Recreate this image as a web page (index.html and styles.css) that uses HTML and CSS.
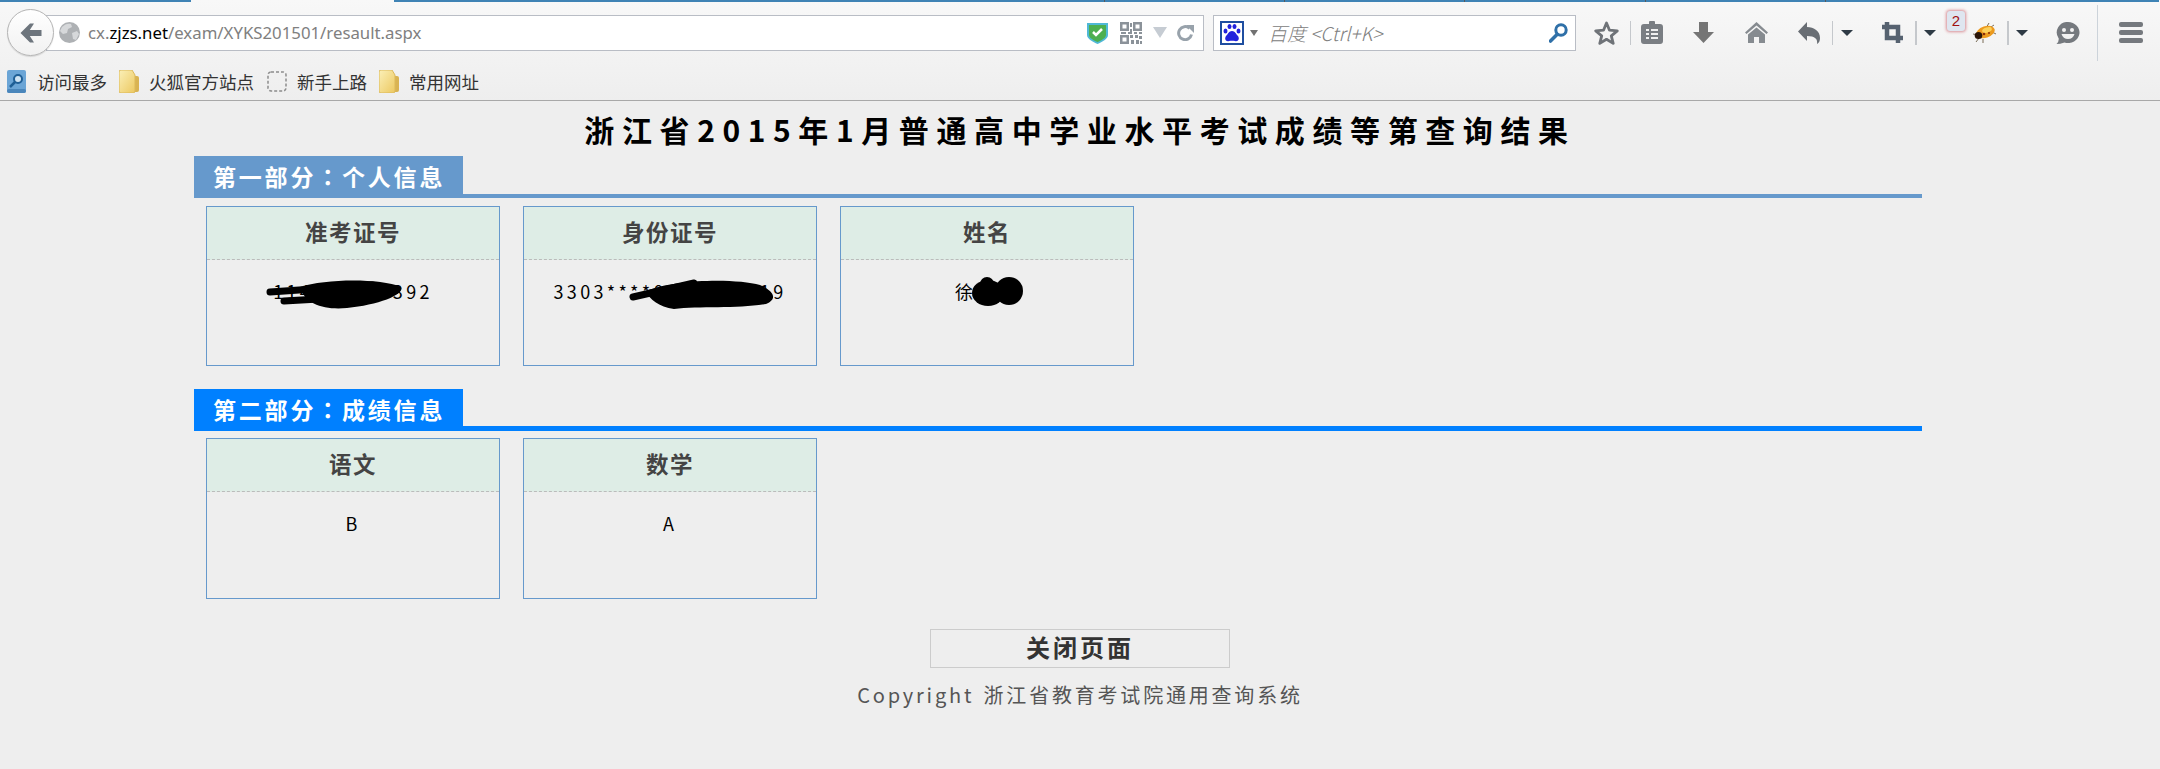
FILE: index.html
```html
<!DOCTYPE html>
<html lang="zh-CN">
<head>
<meta charset="utf-8">
<title>浙江省2015年1月普通高中学业水平考试成绩等第查询结果</title>
<link rel="stylesheet" href="styles.css">
</head>
<body>
<header class="chrome">
  <div class="tabstrip">
    <span class="seg seg-a"></span><span class="seg seg-b"></span><span class="seg seg-c"></span><span class="seg seg-c"></span><span class="seg seg-d"></span><span class="seg seg-e"></span><span class="seg seg-f"></span>
  </div>
  <div class="toolbar">
    <button class="back" aria-label="后退">
      <svg width="24" height="22" viewBox="0 0 24 22"><path d="M11 1.5 1.5 11 11 20.5h4l-4.2-6.6H22.500V8.100H10.800L15 1.500Z" fill="#6d757d"/></svg>
    </button>
    <div class="urlbar">
      <svg class="globe" width="21" height="21" viewBox="0 0 21 21"><circle cx="10.500" cy="10.500" r="10.500" fill="#aeb1b4"/><path d="M3 5c3-3 6-4 9-3l1 3-4 2-1 4-4 1-3-3zM13 11l5-2 2 3-3 6-3-1z" fill="#d6d8da"/></svg>
      <span class="url">cx.<b>zjzs.net</b>/exam/XYKS201501/resault.aspx</span>
      <svg width="21" height="22" viewBox="0 0 21 22"><path d="M0 1h21v12c0 4-6 7-10.500 9C6 20 0 17 0 13Z" fill="#4fb8d6"/><path d="M2 3h17v10c0 3-5 5.500-8.500 7C7 18.500 2 16 2 13Z" fill="#4caf50"/><path d="m6 10 3 3 6-6" fill="none" stroke="#fff" stroke-width="2.500"/></svg>
      <svg class="m-1" width="22" height="22" viewBox="0 0 22 22" fill="#8b9299"><path d="M0 0h9v9H0Zm2.500 2.500v4h4v-4ZM13 0h9v9h-9Zm2.500 2.500v4h4v-4ZM0 13h9v9H0Zm2.500 2.500v4h4v-4Z" fill-rule="evenodd"/><path d="M10 1h2v4h-2zM10 7h2v3h-2zM1 10h5v2H1zM8 10h4v2H8zM14 10h3v2h-3zM19 10h3v2h-3zM10 13h3v3h-3zM15 13h3v3h-3zM19 14h3v3h-3zM11 18h3v4h-3zM16 18h3v4h-3zM20 19h2v3h-2z"/></svg>
      <svg class="m-2" width="14" height="11" viewBox="0 0 14 11"><path d="M0 0h14L7 11Z" fill="#c6ccd3"/></svg>
      <svg class="m-3" width="17" height="16" viewBox="0 0 17 16"><path d="M14.500 9.500a6.500 6.500 0 1 1-2-6.200" fill="none" stroke="#98a2ab" stroke-width="3"/><path d="M9 0h8v8z" fill="#98a2ab"/></svg>
    </div>
    <div class="searchbar">
      <span class="engine">
        <svg width="20" height="20" viewBox="0 0 20 20" fill="#2222dd"><ellipse cx="3.500" cy="8" rx="2" ry="2.500"/><ellipse cx="7.500" cy="3.500" rx="2" ry="2.500"/><ellipse cx="12.500" cy="3.500" rx="2" ry="2.500"/><ellipse cx="16.500" cy="8" rx="2" ry="2.500"/><path d="M10 8c3 0 4 3 6 5 2 3 0 6-3 5-2-.5-4-.5-6 0-3 1-5-2-3-5 2-2 3-5 6-5Z"/></svg>
      </span>
      <span class="tri tri-gray"></span>
      <span class="placeholder">百度 &lt;Ctrl+K&gt;</span>
      <svg class="lens" width="19" height="20" viewBox="0 0 19 20"><circle cx="12" cy="7" r="5.200" fill="none" stroke="#2f70a8" stroke-width="3"/><path d="M8 11.500 1.500 18" stroke="#2f70a8" stroke-width="3.600" stroke-linecap="round"/></svg>
    </div>
    <svg class="g18" width="25" height="24" viewBox="0 0 25 24"><path d="m12.500 2 3 7.200 7.800.6-6 5 1.900 7.600-6.700-4.100-6.700 4.100 1.900-7.600-6-5 7.800-.6Z" fill="none" stroke="#6f7378" stroke-width="2.800" stroke-linejoin="round"/></svg>
    <span class="sep g11"></span>
    <svg class="g10" width="22" height="23" viewBox="0 0 22 23"><path d="M3 3h5V1a1 1 0 0 1 1-1h4a1 1 0 0 1 1 1v2h5a3 3 0 0 1 3 3v14a3 3 0 0 1-3 3H3a3 3 0 0 1-3-3V6a3 3 0 0 1 3-3Z" fill="#7a7e83"/><path d="M5 8h3v2H5zM10 8h7v2h-7zM5 12h3v2H5zM10 12h7v2h-7zM5 16h3v2H5zM10 16h7v2h-7z" fill="#f0f0f0"/></svg>
    <svg class="g30" width="21" height="21" viewBox="0 0 21 21"><path d="M6 0h9v10h6L10.500 21 0 10h6Z" fill="#757575"/></svg>
    <svg class="g31" width="23" height="21" viewBox="0 0 23 21"><path d="M11.500 0 23 10.500l-1.500 1.500-10-8.500-10 8.500L0 10.500Z" fill="#868b90"/><path d="M11.500 5.500 20 12.500V21h-6v-6H9v6H3v-8.500Z" fill="#868b90"/></svg>
    <svg class="g30" width="22" height="22" viewBox="0 0 22 22"><path d="M9 0v5c7 0 13 4 13 11 0 3-1 5-3 6 1-5-2-8-10-8v5L0 9.500Z" fill="#696e74"/></svg>
    <span class="sep g12"></span>
    <span class="tri tri-dark g8"></span>
    <svg class="g29" width="21" height="21" viewBox="0 0 21 21"><path d="M5 0v16h16M0 5h16v16" fill="none" stroke="#566270" stroke-width="4.500"/></svg>
    <span class="sep sep-w g12"></span>
    <span class="tri tri-dark g7"></span>
    <span class="badge g11">2</span>
    <svg class="g7" width="24" height="20" viewBox="0 0 24 20"><path d="M6 12 1 11M7 15l-3 4M11 16l0 4M14 5l3-5M19 4l3-2M20 9l4 2" stroke="#5a4a30" stroke-width=".8"/><ellipse cx="13.500" cy="9" rx="9.500" ry="5.800" transform="rotate(-18 13.500 9)" fill="#ec9a1e"/><ellipse cx="15" cy="7" rx="5" ry="2.500" transform="rotate(-18 15 7)" fill="#fbd05a"/><ellipse cx="6.500" cy="12.500" rx="3.800" ry="3.500" fill="#2a1508"/><circle cx="12" cy="11" r="1.300" fill="#8a2d08"/><circle cx="17" cy="10" r="1" fill="#8a2d08"/></svg>
    <span class="sep sep-w g11"></span>
    <span class="tri tri-dark g7"></span>
    <svg class="g27" width="25" height="22" viewBox="0 0 25 22"><path d="M13 0a11.500 10.500 0 1 1-3.500 20.500Q5 22 1.500 22q2.500-2 2.200-5.500A10.500 10.500 0 0 1 13 0Z" fill="#75797e"/><circle cx="9" cy="8" r="2" fill="#f2f2f2"/><circle cx="17" cy="8" r="2" fill="#f2f2f2"/><path d="M6.500 12h13q-1.500 5-6.500 5t-6.500-5Z" fill="#f2f2f2"/></svg>
    <span class="sep sep-long g17"></span>
    <span class="menu g21"><i></i><i></i><i></i></span>
  </div>
  <nav class="bookmarks">
    <a class="bm bm-1"><svg width="21" height="23" viewBox="0 0 21 23"><rect x="1" width="19" height="23" rx="2" fill="#6ba5d6"/><rect x="1" y="19" width="19" height="4" rx="2" fill="#4a86bb"/><circle cx="12" cy="9" r="4" fill="#cfe3f3" stroke="#1f5f96" stroke-width="2"/><path d="M9 12l-5 5" stroke="#1f5f96" stroke-width="2.500"/></svg>访问最多</a>
    <a class="bm bm-2"><svg width="20" height="23" viewBox="0 0 20 23"><use href="#folder"/></svg>火狐官方站点</a>
    <a class="bm bm-3"><svg width="20" height="21" viewBox="0 0 20 21"><rect x="1" y="1" width="18" height="19" rx="3" fill="none" stroke="#8c8c8c" stroke-width="1.500" stroke-dasharray="3 2"/></svg>新手上路</a>
    <a class="bm bm-4"><svg width="20" height="23" viewBox="0 0 20 23"><use href="#folder"/></svg>常用网址</a>
    <svg class="defs" width="0" height="0"><defs><linearGradient id="fg" x1="0" y1="0" x2="1" y2="1"><stop offset="0" stop-color="#fbf0b8"/><stop offset="1" stop-color="#ecc860"/></linearGradient><g id="folder"><path d="M15 6h3a2 2 0 0 1 2 2v12a2 2 0 0 1-2 2h-4Z" fill="#d9b352"/><path d="M2 0h11l3 5v16a2 2 0 0 1-2 2H2a2 2 0 0 1-2-2V2a2 2 0 0 1 2-2Z" fill="url(#fg)" stroke="#dcb95a"/></g></defs></svg>
  </nav>
</header>

<main class="page">
  <h1 class="title">浙江省2015年1月普通高中学业水平考试成绩等第查询结果</h1>

  <section class="section section-1">
    <h2 class="sec-head"><span class="sec-tab">第一部分<span class="colon" lang="zh-TW">：</span>个人信息</span></h2>
    <div class="cards">
      <article class="card">
        <h3 class="card-head">准考证号</h3>
        <p class="card-val">114000000392</p>
        <svg class="scribble" width="292" height="158" viewBox="0 0 292 158"><path d="M63 85 165 78M77 94 112 92" stroke="#000" stroke-width="7" stroke-linecap="round"/><path d="M93 80C118 72 172 71 194 80 198 88 170 98 140 101 118 103 98 98 93 80Z"/></svg>
      </article>
      <article class="card">
        <h3 class="card-head">身份证号</h3>
        <p class="card-val">3303****0000000019</p>
        <svg class="scribble" width="292" height="158" viewBox="0 0 292 158"><path d="M109 90 170 76" stroke="#000" stroke-width="7" stroke-linecap="round"/><path d="M122 84C150 72 212 71 236 78 250 84 254 92 242 97 215 102 175 99 150 102 135 100 125 92 122 84Z"/></svg>
      </article>
      <article class="card">
        <h3 class="card-head">姓名</h3>
        <p class="card-val">徐某某</p>
        <svg class="scribble" width="292" height="158" viewBox="0 0 292 158"><ellipse cx="147" cy="86" rx="16" ry="13"/><circle cx="146" cy="77" r="7"/><ellipse cx="168" cy="84" rx="14" ry="14"/></svg>
      </article>
    </div>
  </section>

  <section class="section section-2">
    <h2 class="sec-head"><span class="sec-tab">第二部分<span class="colon" lang="zh-TW">：</span>成绩信息</span></h2>
    <div class="cards">
      <article class="card">
        <h3 class="card-head">语文</h3>
        <p class="card-val">B</p>
      </article>
      <article class="card">
        <h3 class="card-head">数学</h3>
        <p class="card-val">A</p>
      </article>
    </div>
  </section>

  <button class="close">关闭页面</button>
  <footer class="copyright">Copyright 浙江省教育考试院通用查询系统</footer>
</main>
</body>
</html>
```

FILE: styles.css
```css
* { box-sizing: border-box; }
html, body { margin: 0; padding: 0; }
body {
  background: #eeeeee;
  width: 2160px;
  height: 769px;
  overflow: hidden;
  font-family: "Noto Sans CJK SC", "Noto Sans", sans-serif;
}

/* browser chrome */
.chrome { height: 101px; border-bottom: 1px solid #a8a8a8; background: linear-gradient(#f8f8f8, #f3f3f3 50%, #eeeeee); }
.tabstrip { display: flex; height: 2px; }
.seg { display: block; height: 2px; background: #3f83b5; border-right: 1px solid #5b5b5b; }
.seg-a { width: 191px; margin-right: 203px; border-right: 0; }
.seg-b { width: 711px; }
.seg-c { width: 180px; }
.seg-d { width: 181px; }
.seg-e { width: 180px; }
.seg-f { width: 333px; border-right: 0; }

.toolbar { display: flex; align-items: center; height: 61px; padding-left: 7px; }
.back {
  position: relative;
  z-index: 1;
  flex: none;
  display: flex;
  align-items: center;
  justify-content: center;
  width: 47px;
  height: 47px;
  padding: 0;
  border: 1px solid #b4b4b4;
  border-radius: 50%;
  background: linear-gradient(#ffffff, #f1f1f1);
  box-shadow: 0 1px 1px rgba(0,0,0,.12);
}
.urlbar {
  flex: none;
  display: flex;
  align-items: center;
  width: 1158px;
  height: 36px;
  margin-left: -8px;
  padding-left: 12px;
  background: #fff;
  border: 1px solid #b9bdc5;
}
.globe { flex: none; }
.url { flex: 1; margin-left: 8px; font-family: "Noto Sans", sans-serif; font-size: 16.800px; color: #808080; white-space: nowrap; }
.url b { font-weight: 400; color: #000; }
.m-1 { margin-left: 12px; }
.m-2 { margin-left: 11px; }
.m-3 { margin-left: 10px; margin-right: 9px; }

.searchbar {
  flex: none;
  display: flex;
  align-items: center;
  width: 363px;
  height: 36px;
  margin-left: 9px;
  padding-left: 6px;
  background: #fff;
  border: 1px solid #b9bdc5;
}
.engine { flex: none; display: flex; align-items: center; justify-content: center; width: 24px; height: 24px; border: 2px solid #1f4ea0; }
.placeholder { flex: 1; margin-left: 10px; font-size: 19px; font-style: italic; font-weight: 300; color: #808080; white-space: nowrap; }
.lens { flex: none; margin-right: 7px; }

.tri { flex: none; display: block; width: 0; height: 0; border-style: solid; border-color: transparent; border-bottom-width: 0; }
.tri-gray { margin-left: 6px; border-width: 6px 4px 0; border-top-color: #727272; }
.tri-dark { border-width: 6px 6px 0; border-top-color: #2e3a45; }

.sep { flex: none; display: block; width: 1px; height: 24px; background: #c5c8cc; }
.sep-w { width: 2px; }
.sep-long { height: 56px; background: #ccd3da; }

.g7 { margin-left: 7px; }
.g8 { margin-left: 8px; }
.g10 { margin-left: 10px; }
.g11 { margin-left: 11px; }
.g12 { margin-left: 12px; }
.g17 { margin-left: 17px; }
.g18 { margin-left: 18px; }
.g21 { margin-left: 21px; }
.g27 { margin-left: 27px; }
.g29 { margin-left: 29px; }
.g30 { margin-left: 30px; }
.g31 { margin-left: 31px; }
.toolbar svg { flex: none; }

.badge {
  flex: none;
  align-self: flex-start;
  width: 18px;
  height: 20px;
  margin-top: 9px;
  border-radius: 3px;
  background: #dfe6f0;
  box-shadow: 0 0 3px 1px #d98f96;
  font-family: "Liberation Sans", sans-serif;
  font-size: 15px;
  line-height: 20px;
  text-align: center;
  color: #a01010;
}
.menu { flex: none; display: flex; flex-direction: column; gap: 3px; width: 24px; }
.menu i { display: block; height: 5px; border-radius: 2px; background: #75797e; }

.bookmarks { display: flex; align-items: center; height: 37px; padding-left: 6px; font-size: 17.500px; color: #333; }
.bm { display: flex; align-items: center; gap: 10px; white-space: nowrap; }
.bm svg { flex: none; }
.bm-2 { margin-left: 12px; }
.bm-3 { margin-left: 13px; }
.bm-4 { margin-left: 12px; }
.defs { position: absolute; }

/* page */
.page { display: flex; flex-direction: column; }
.title {
  margin: 0;
  height: 55px;
  padding-top: 3px;
  font-size: 30px;
  font-weight: 700;
  line-height: 51px;
  letter-spacing: 7.600px;
  text-align: center;
  color: #000;
}
.section { width: 1728px; margin-left: 194px; }
.sec-head { display: flex; height: 42px; margin: 0; }
.section-1 .sec-head { border-bottom: 4px solid #6699cc; }
.section-2 .sec-head { border-bottom: 5px solid #0080ff; }
.sec-tab {
  display: block;
  width: 269px;
  padding-left: 19px;
  font-size: 23px;
  font-weight: 700;
  line-height: 40px;
  letter-spacing: 2.800px;
  color: #fff;
  white-space: nowrap;
}
.colon { font-family: "Noto Sans CJK TC", sans-serif; }
.section-1 .sec-tab { background: #6699cc; }
.section-2 .sec-tab { background: #0080ff; }
.cards { display: flex; gap: 23px; padding-left: 12px; }
.section-1 .cards { padding-top: 8px; }
.section-2 .cards { padding-top: 7px; }
.section-2 { margin-top: 23px; }
.card { position: relative; width: 294px; height: 160px; border: 1px solid #6699cc; }
.section-2 .card { height: 161px; }
.card-head {
  margin: 0;
  height: 53px;
  background: #deede6;
  border-bottom: 1px dashed #bbbbbb;
  font-size: 22.500px;
  font-weight: 700;
  line-height: 48px;
  letter-spacing: 1.500px;
  text-align: center;
  color: #444;
}
.card-val {
  margin: 0;
  padding-top: 18px;
  font-size: 18px;
  line-height: 26px;
  letter-spacing: 3.300px;
  text-align: center;
  color: #000;
}
.scribble { position: absolute; left: 0; top: 0; }
.close {
  align-self: center;
  width: 300px;
  height: 39px;
  margin-top: 30px;
  padding: 0 0 3px;
  background: transparent;
  border: 1px solid #cccccc;
  font-family: inherit;
  font-size: 24px;
  font-weight: 700;
  line-height: 34px;
  letter-spacing: 3px;
  color: #333;
}
.copyright {
  margin-top: 12px;
  font-size: 20px;
  line-height: 30px;
  letter-spacing: 2.800px;
  word-spacing: 2px;
  text-align: center;
  color: #555;
}
```
